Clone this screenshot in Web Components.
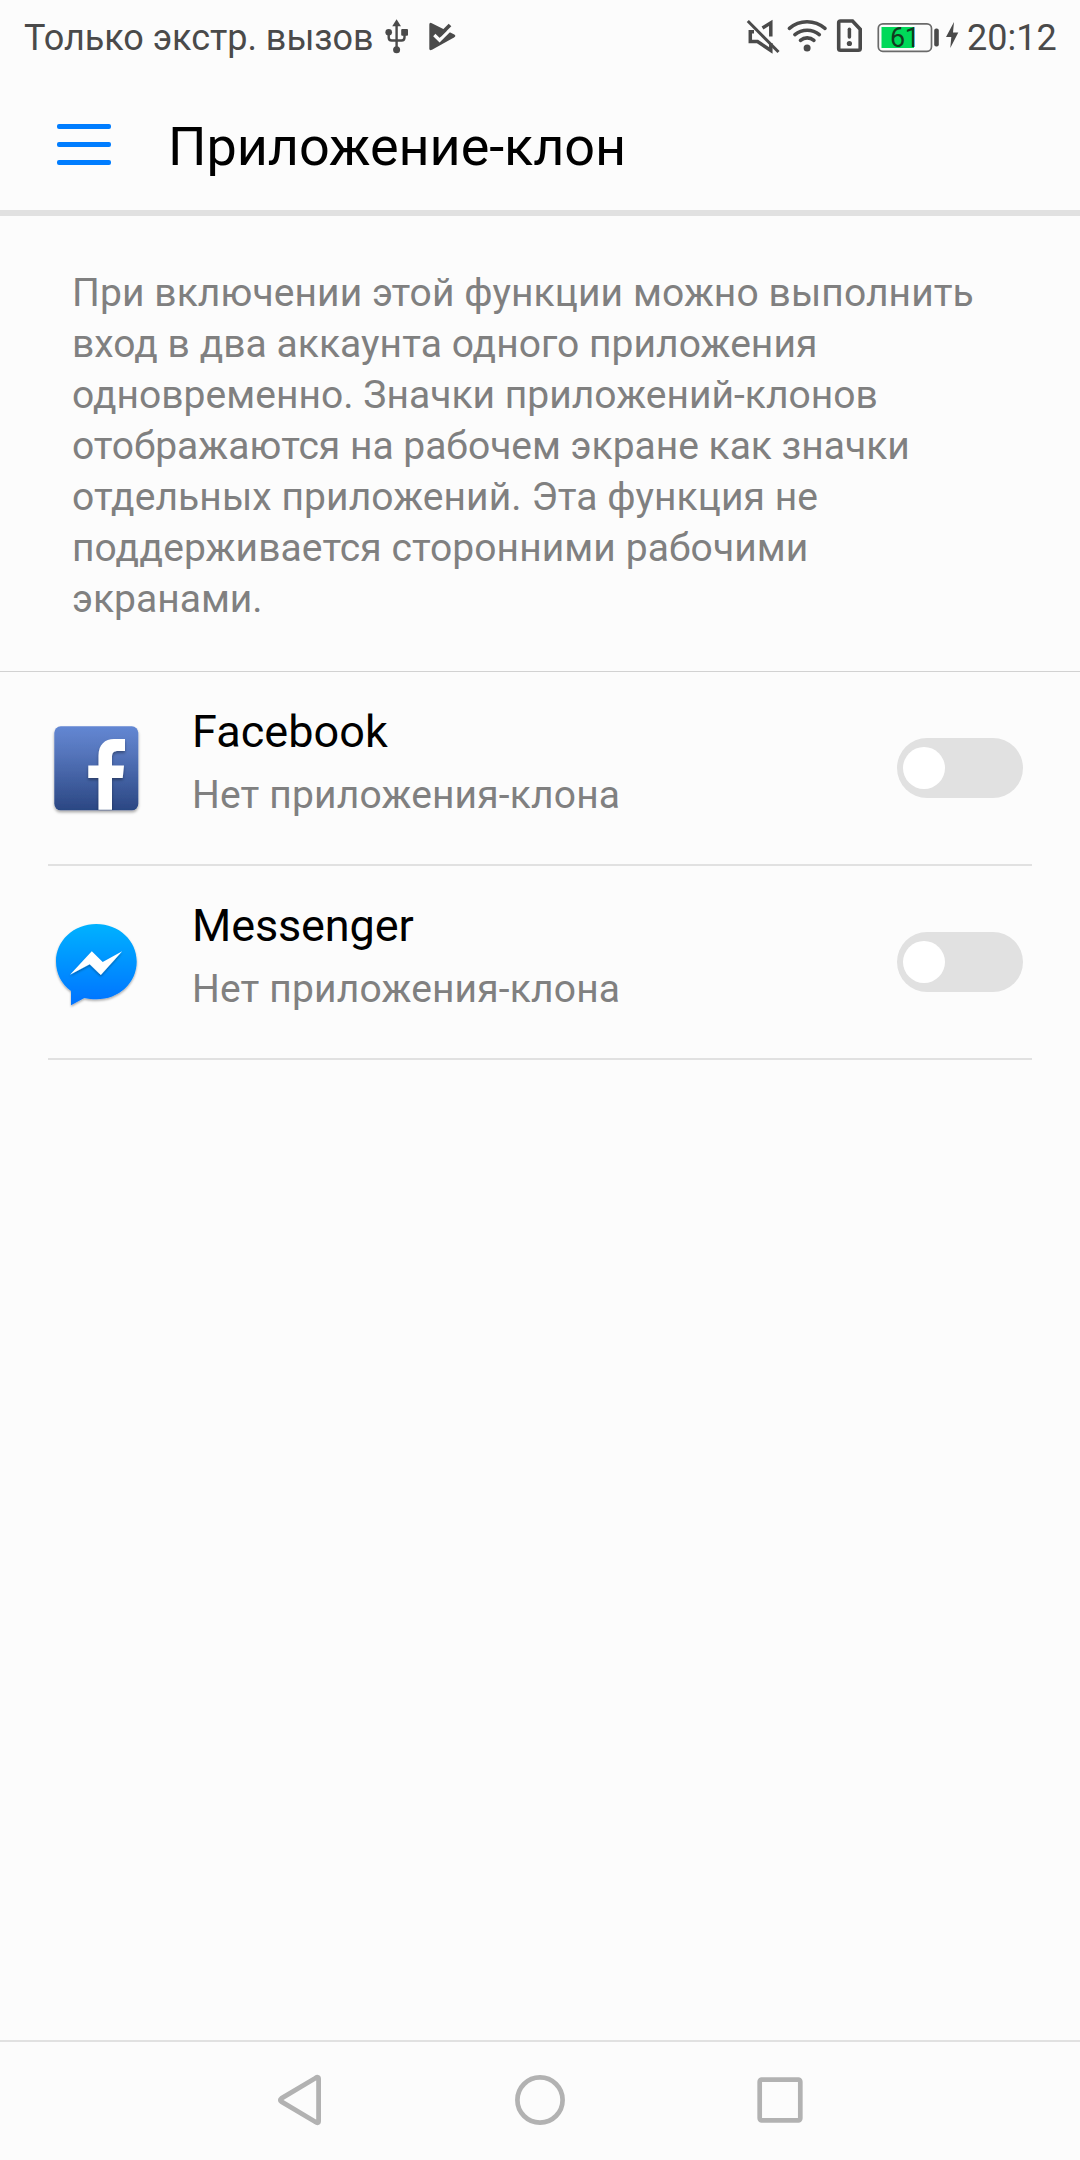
<!DOCTYPE html>
<html lang="ru">
<head>
<meta charset="utf-8">
<title>Приложение-клон</title>
<style>
html,body{margin:0;background:#fcfcfc}
body{width:1080px;height:2160px;overflow:hidden;font-family:Roboto,"Noto Sans",sans-serif}
</style>
</head>
<body>
<clone-screen></clone-screen>
<script>
const define = (name, html) => customElements.define(name, class extends HTMLElement {
  constructor() {
    super();
    const t = document.createElement('template');
    t.innerHTML = html;
    this.attachShadow({mode: 'open'}).append(t.content.cloneNode(true));
  }
});

define('status-bar', `
<style>
:host{display:flex;height:72px;color:#4a4a4a;font-size:36px;line-height:42px;box-sizing:border-box;padding:17px 24px 0;justify-content:space-between;white-space:nowrap}
div{display:flex}
svg{display:block;flex:none;margin-top:-17px}
.l{gap:12px}.text{width:349px;letter-spacing:-.03px}
.r{width:312px}
.time{margin-left:7px}
.battery{display:grid;margin-right:5px}
.battery>*{grid-area:1/1}
.num{font-size:27px;line-height:32px;color:#123a20;margin:5px 0 0 13px;letter-spacing:-.4px}
</style>
<div class="l"><span class="text">Только экстр. вызов</span>
<svg width="25" height="72" viewBox="385 0 25 72" fill="none" stroke="#4a4a4a" stroke-width="2.4"><path d="M396.6 24V50M388.7 33V37.5Q388.7 40.5 391.7 40.5H401.5Q404.5 40.5 404.5 37.5V33"/><g fill="#4a4a4a" stroke="none"><path d="M396.6 19.3L401 26.3H392.2Z"/><circle cx="388.7" cy="32.3" r="3.3"/><rect x="401.2" y="29" width="6.8" height="6.8" rx="1"/><circle cx="396.6" cy="49.8" r="3.5"/></g></svg>
<svg width="30" height="72" viewBox="422 0 30 72" style="overflow:visible"><path fill="#4a4a4a" d="M429.3 24.8Q429.3 22 431.8 23.2L454.3 34.6Q456.500 36 454 37.500L432 49.700Q429.300 51 429.300 48.500Z"/><path d="M434.300 35L439.600 40.200L453.500 26.300" fill="none" stroke="#fcfcfc" stroke-width="3.200"/><path d="M439.500 35.500L450 25" fill="none" stroke="#4a4a4a" stroke-width="3.800"/></svg></div>
<div class="r">
<svg width="39" height="72" viewBox="744 0 39 72" fill="none" stroke="#4a4a4a" stroke-width="3.500"><path d="M754 31.800H750.300V41.500H757.500L770.800 50.500V43M762.500 28L770.800 22.800V36.500" /><path d="M747.800 21L778.500 52" stroke-width="3"/></svg>
<svg width="48" height="72" viewBox="783 0 48 72" fill="none" stroke="#4a4a4a" stroke-width="3.600" stroke-linecap="round"><path d="M789.400 28.400C799.500 19.600 814.500 19.600 825 28.400M794.900 34.600C802 28.700 812.300 28.700 819.300 34.600M800.500 40.400C804.400 37 810 37 813.900 40.400"/><circle cx="807.100" cy="48" r="3.500" fill="#4a4a4a" stroke="none"/></svg>
<svg width="46" height="72" viewBox="831 0 46 72"><path d="M840.500 21H852.500L860.200 29.200V48.500Q860.200 50.300 858.400 50.300H840.500Q838.700 50.300 838.700 48.500V22.800Q838.700 21 840.500 21Z" fill="none" stroke="#4a4a4a" stroke-width="3.600"/><path d="M849.400 29.300V37" stroke="#4a4a4a" stroke-width="3.500" stroke-linecap="round"/><circle cx="849.400" cy="43.500" r="2.600" fill="#4a4a4a"/></svg>
<div class="battery"><svg width="63" height="72" viewBox="877 0 63 72"><rect x="878.300" y="23.800" width="53.200" height="27.500" rx="4.500" fill="none" stroke="#6a6a6a" stroke-width="1.700"/><path fill="#00d959" d="M881.500 27H914V48H881.500Z"/><rect x="934.200" y="28.500" width="4.600" height="18" rx="2" fill="#4a4a4a"/></svg><span class="num">61</span></div>
<svg width="15" height="72" viewBox="945 0 15 72"><path fill="#4a4a4a" d="M954 22L946 37H951.300L950.300 48L958.300 32.500H953Z"/></svg>
<span class="time">20:12</span></div>`);

define('title-bar', `
<style>
:host{display:flex;align-items:flex-start;height:138px;box-sizing:content-box;border-bottom:6px solid #e1e1e1;color:#000}
.menu{display:flex;flex-direction:column;gap:13px;margin:51.500px 57px 0 57px;width:54px}
i{height:5px;background:#007dff;border-radius:2px}
h1{font-size:54px;line-height:64px;font-weight:400;margin:43px 0 0;white-space:nowrap;letter-spacing:-.07px}
</style><div class="menu"><i></i><i></i><i></i></div><h1><slot></slot></h1>`);

define('feature-note', `
<style>:host{display:block;padding:52px 72px 46px;border-bottom:1px solid #d2d2d2;color:#808080;font-size:39px;line-height:51px;white-space:nowrap}</style><slot></slot>`);

define('note-line', `
<style>:host{display:block;letter-spacing:var(--track,0)}</style><slot></slot>`);

define('toggle-switch', `
<style>:host{display:flex;flex:none;width:126px;height:60px;box-sizing:border-box;border-radius:30px;background:#e1e1e1;padding:9px 6px}
i{width:42px;height:42px;border-radius:50%;background:#fff}</style><i></i>`);

define('app-row', `
<style>
:host{display:flex;align-items:center;height:192px;margin:0 48px;border-bottom:2px solid #e1e1e1;white-space:nowrap}
.icon{width:96px;height:96px;flex:none}
.copy{flex:1;margin-left:48px;height:192px;box-sizing:border-box;padding-top:33px}
.name{font-size:45px;line-height:54px;color:#000;letter-spacing:var(--track,0)}
.sub{font-size:39px;line-height:46px;color:#808080;margin-top:13px;letter-spacing:.16px}
toggle-switch{margin-right:9px}
</style>
<div class="icon"><slot name="icon"></slot></div>
<div class="copy"><div class="name"><slot name="name"></slot></div><div class="sub"><slot></slot></div></div>
<toggle-switch></toggle-switch>`);

define('facebook-icon', `
<style>:host,svg{display:block}</style>
<svg width="96" height="96" viewBox="48 720 96 96" style="overflow:visible"><defs><linearGradient id="g" x1="0" y1="0" x2="0" y2="1"><stop stop-color="#6387d3"/><stop offset=".3" stop-color="#5676bd"/><stop offset="1" stop-color="#2b4783"/></linearGradient><filter id="s" x="-20%" y="-20%" width="140%" height="140%"><feDropShadow dx="0" dy="2" stdDeviation="1.500" flood-opacity=".35"/></filter><clipPath id="c"><rect x="54.300" y="726.300" width="84" height="84" rx="6.500"/></clipPath></defs>
<rect x="54.300" y="726.300" width="84" height="84" rx="6.500" fill="url(#g)" filter="url(#s)"/>
<g clip-path="url(#c)"><path filter="url(#s)" fill="#fff" d="M98.500 809.800V778H88.300V765.500H98.500V755.500C98.500 744.500 105 739 114 739H125V751H118C113.500 751 112 753 112 757V765.500H124L122.700 778H112V809.800Z"/></g></svg>`);

define('messenger-icon', `
<style>:host,svg{display:block}</style>
<svg width="96" height="96" viewBox="48 914 96 96" style="overflow:visible"><defs><linearGradient id="g" x1="0" y1="0" x2="0" y2="1"><stop stop-color="#00b2ff"/><stop offset="1" stop-color="#0072ff"/></linearGradient><filter id="s" x="-20%" y="-20%" width="140%" height="140%"><feDropShadow dx="0" dy="1.500" stdDeviation="1.300" flood-opacity=".35"/></filter></defs>
<path filter="url(#s)" fill="url(#g)" d="M96.300 924C119 924 136.700 940.500 136.700 961.500C136.700 982.800 119 999.300 96.300 999.300C92 999.300 88 998.800 84.300 998L71 1005.300V991C61.500 984 56 973.500 56 961.500C56 940.500 73.700 924 96.300 924Z"/>
<path filter="url(#s)" fill="#fff" d="M70 974.800L91.800 951.200L102.700 962L122.200 951.200L100.800 975L89.700 964.300Z"/></svg>`);

define('nav-bar', `
<style>:host{display:flex;height:118px;border-top:2px solid #e1e1e1;justify-content:center;gap:180px}
svg{display:block;width:60px;height:118px}</style>
<svg viewBox="270 2042 60 118" fill="none" stroke="#b2b2b2" stroke-width="4.800"><path stroke-linejoin="round" d="M315.200 2078.200Q318.600 2076 318.600 2079V2121Q318.600 2124 315.200 2121.800L281.400 2101.600Q279.200 2100 281.400 2098.400Z"/></svg>
<svg viewBox="510 2042 60 118"><circle cx="540" cy="2100" r="22.600" fill="none" stroke="#b2b2b2" stroke-width="4.700"/></svg>
<svg viewBox="750 2042 60 118"><rect x="759.700" y="2079.700" width="40.600" height="40.600" rx="2" fill="none" stroke="#b2b2b2" stroke-width="4.700"/></svg>`);

define('clone-screen', `
<style>:host{display:flex;flex-direction:column;width:1080px;height:2160px;background:#fcfcfc}main{flex:1}</style>
<status-bar></status-bar>
<title-bar>Приложение-клон</title-bar>
<main>
<feature-note>
<note-line style="--track:.09px">При включении этой функции можно выполнить</note-line>
<note-line style="--track:.05px">вход в два аккаунта одного приложения</note-line>
<note-line style="--track:.03px">одновременно. Значки приложений-клонов</note-line>
<note-line style="--track:-.01px">отображаются на рабочем экране как значки</note-line>
<note-line style="--track:.08px">отдельных приложений. Эта функция не</note-line>
<note-line style="--track:.08px">поддерживается сторонними рабочими</note-line>
<note-line>экранами.</note-line>
</feature-note>
<app-row style="--track:.06px"><facebook-icon slot="icon"></facebook-icon><span slot="name">Facebook</span>Нет приложения-клона</app-row>
<app-row style="--track:-.12px"><messenger-icon slot="icon"></messenger-icon><span slot="name">Messenger</span>Нет приложения-клона</app-row>
</main>
<nav-bar></nav-bar>`);
</script>
</body>
</html>
